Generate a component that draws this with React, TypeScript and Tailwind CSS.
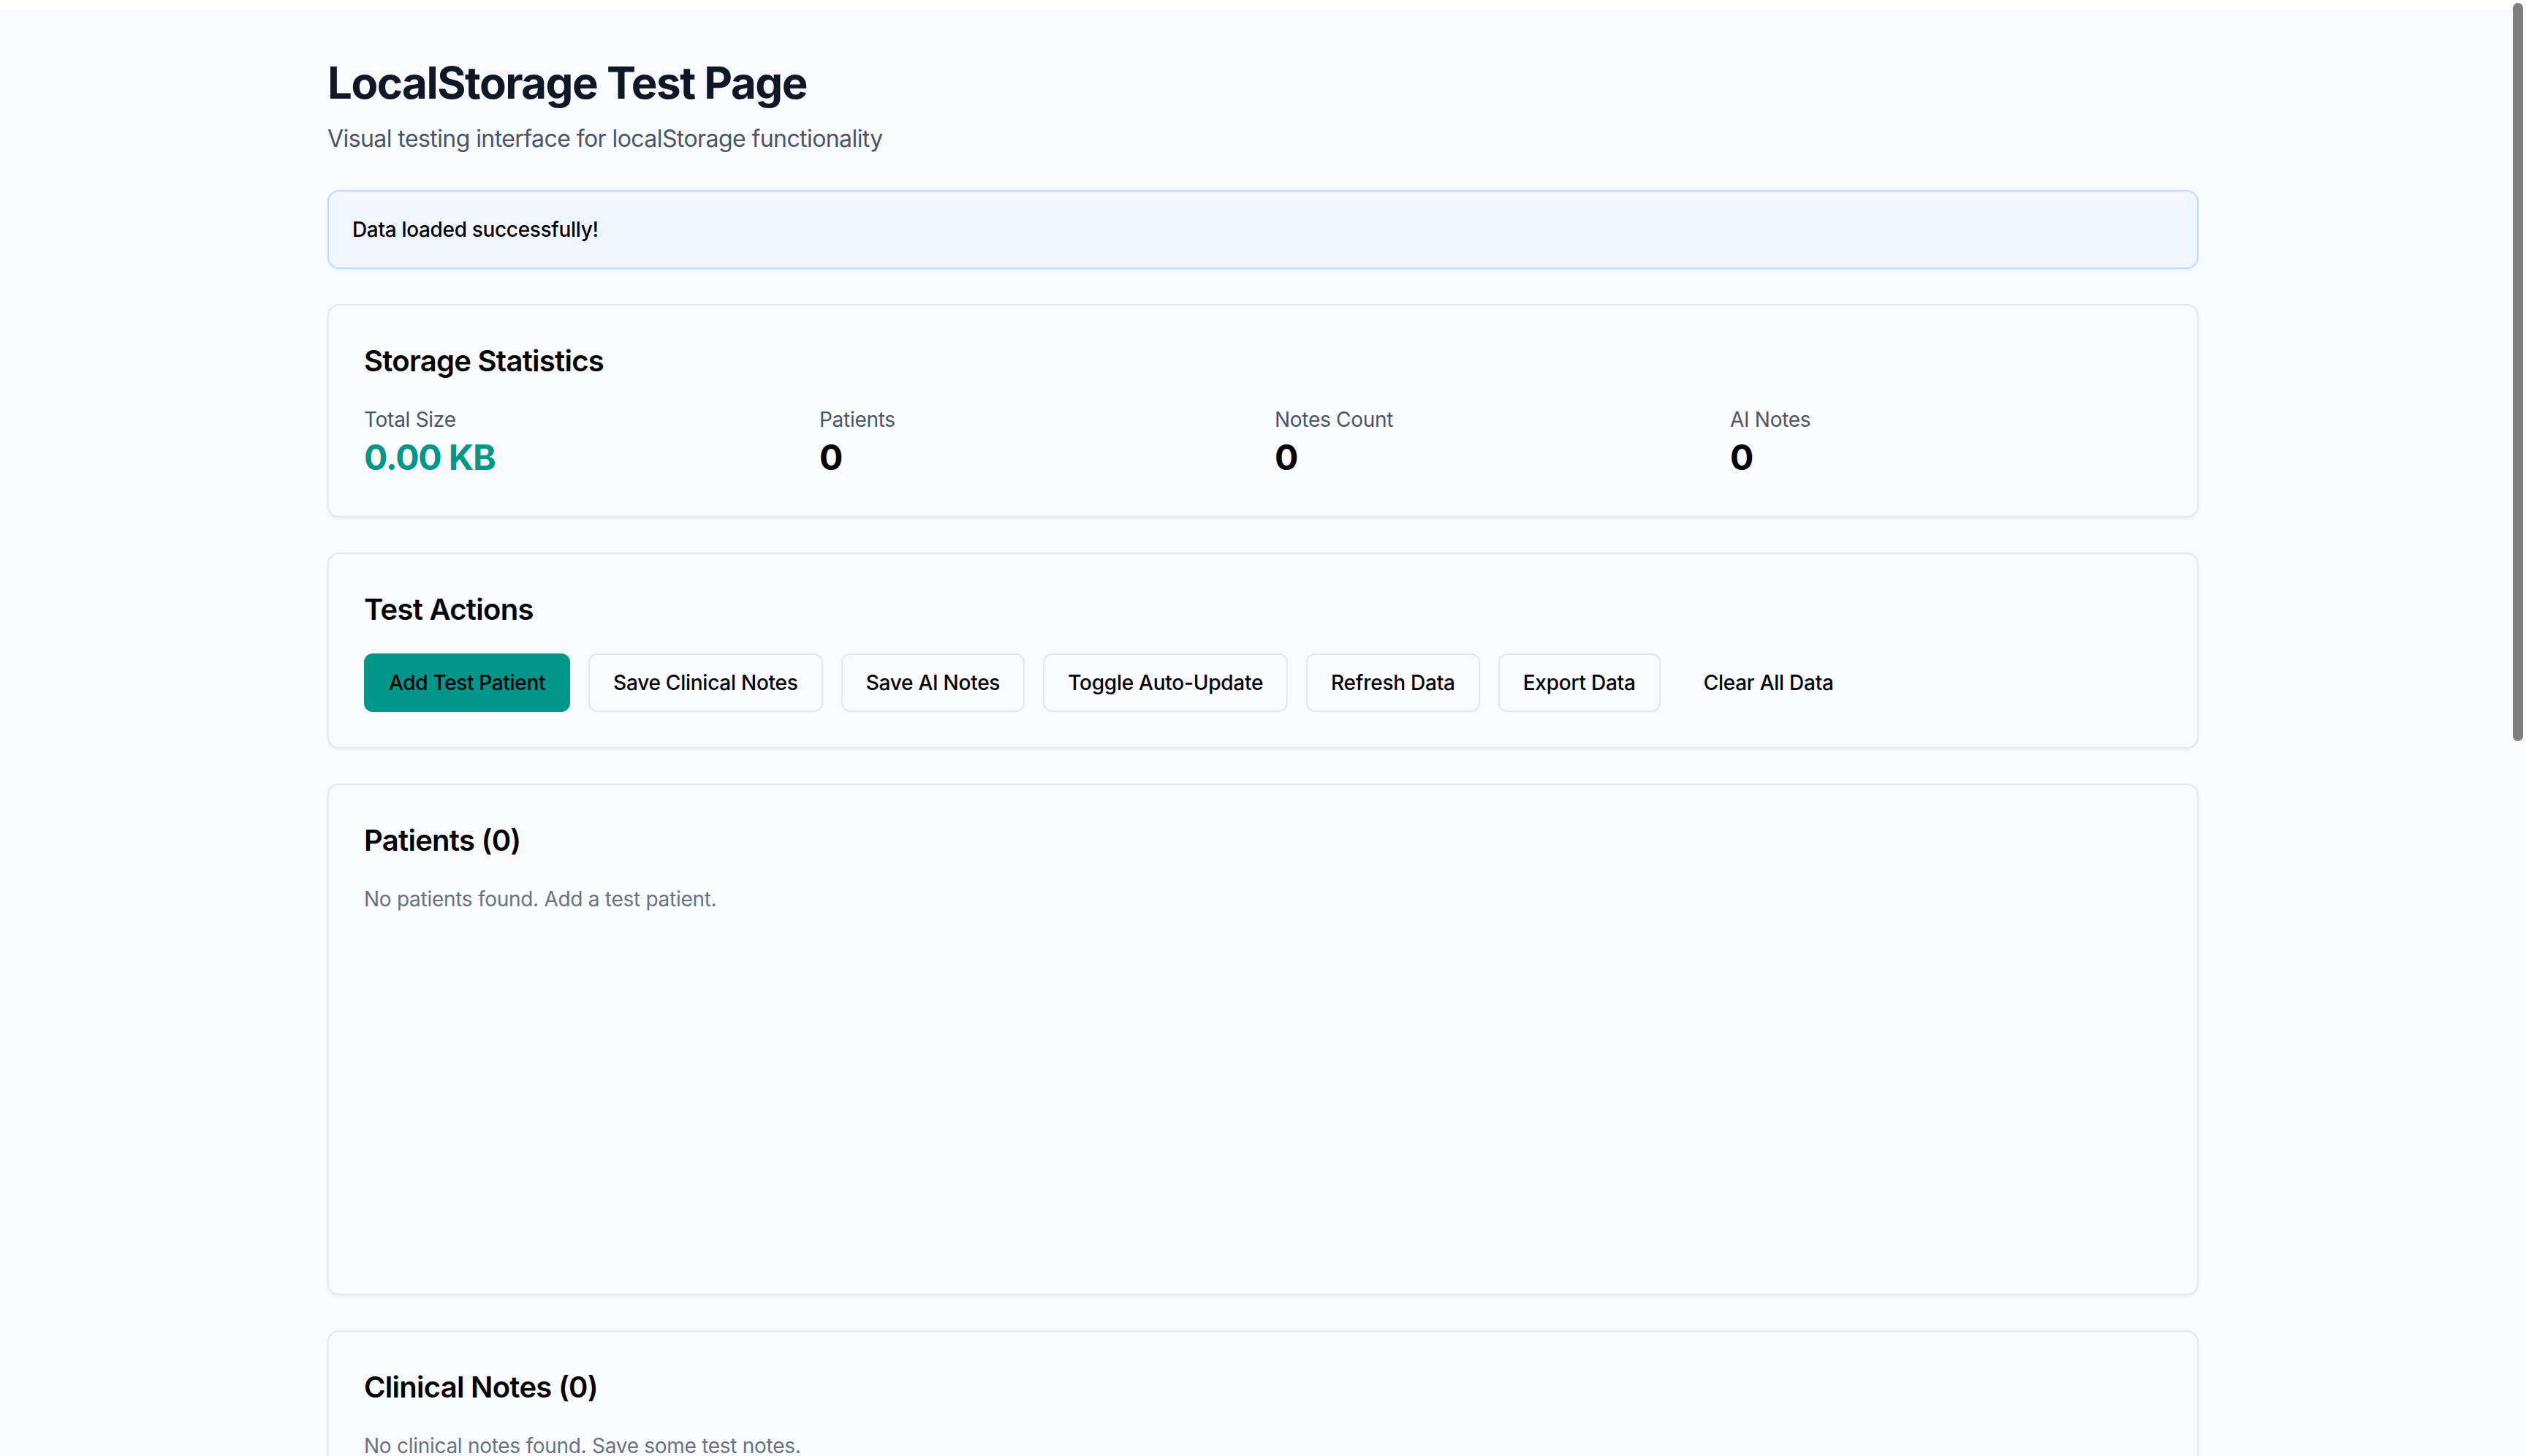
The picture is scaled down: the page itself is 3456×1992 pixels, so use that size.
import { useState } from 'react';

const stats = [
  { label: 'Total Size', value: '0.00 KB', accent: true },
  { label: 'Patients', value: '0' },
  { label: 'Notes Count', value: '0' },
  { label: 'AI Notes', value: '0' },
];

const actions = [
  'Save Clinical Notes',
  'Save AI Notes',
  'Toggle Auto-Update',
  'Refresh Data',
  'Export Data',
];

function Card({ title, children }: { title: string; children: React.ReactNode }) {
  return (
    <section className="mb-12 rounded-[16px] border-2 border-gray-200 bg-gray-50 p-12 shadow-[0_2px_4px_rgba(0,0,0,0.05)]">
      <h2 className="mb-8 text-[40px] leading-[56px] font-semibold tracking-[-0.018em] text-black">{title}</h2>
      {children}
    </section>
  );
}

export default function App() {
  const [autoUpdate, setAutoUpdate] = useState(false);

  return (
    <div className="relative h-[1992px] overflow-hidden bg-gray-50 font-['Inter','Noto_Sans',sans-serif]">
      <div className="h-[13px] bg-white" />
      <main className="mx-auto max-w-[2560px] py-16">
        <h1 className="text-[60px] leading-[72px] font-bold tracking-[-0.025em] text-gray-900">
          LocalStorage Test Page
        </h1>
        <p className="mt-[17px] text-[32px] leading-[48px] tracking-[-0.018em] text-gray-600">
          Visual testing interface for localStorage functionality
        </p>

        <div className="mt-[46px] mb-12 rounded-[16px] border-2 border-blue-200 bg-blue-50 p-8 shadow-[0_2px_4px_rgba(0,0,0,0.04)]">
          <p className="text-[28px] leading-[40px] font-medium tracking-[-0.012em] text-black">
            Data loaded successfully!
          </p>
        </div>

        <Card title="Storage Statistics">
          <div className="grid grid-cols-4 gap-8">
            {stats.map((s) => (
              <div key={s.label}>
                <div className="text-[28px] leading-[40px] tracking-[-0.01em] text-gray-600">{s.label}</div>
                <div
                  className={`text-[48px] leading-[64px] font-bold tracking-[-0.025em] ${s.accent ? 'text-teal-600' : 'text-black'}`}
                >
                  {s.value}
                </div>
              </div>
            ))}
          </div>
        </Card>

        <Card title="Test Actions">
          <div className="flex flex-wrap gap-[25px]">
            <button className="h-[80px] rounded-[12px] border-2 border-teal-600 bg-teal-600 px-8 text-[28px] font-medium tracking-[-0.012em] text-black">
              Add Test Patient
            </button>
            {actions.map((a) => (
              <button
                key={a}
                onClick={() => a === 'Toggle Auto-Update' && setAutoUpdate(!autoUpdate)}
                className="h-[80px] rounded-[12px] border-2 border-gray-200 bg-gray-50 px-8 text-[28px] font-medium tracking-[-0.009em] text-black"
              >
                {a}
              </button>
            ))}
            <button className="h-[80px] rounded-[12px] border-2 border-transparent px-8 text-[28px] font-medium tracking-[-0.009em] text-black">
              Clear All Data
            </button>
          </div>
        </Card>

        <Card title="Patients (0)">
          <div className="h-[512px]">
            <p className="text-[28px] leading-[40px] tracking-[-0.01em] text-gray-500">
              No patients found. Add a test patient.
            </p>
          </div>
        </Card>

        <Card title="Clinical Notes (0)">
          <div className="h-[512px]">
            <p className="text-[28px] leading-[40px] tracking-[-0.01em] text-gray-500">
              No clinical notes found. Save some test notes.
            </p>
          </div>
        </Card>
      </main>

      {/* overlay scrollbar thumb */}
      <div className="absolute top-[4px] right-[4px] h-[1010px] w-[14px] rounded-full bg-[#7f7f7f]" />
    </div>
  );
}
